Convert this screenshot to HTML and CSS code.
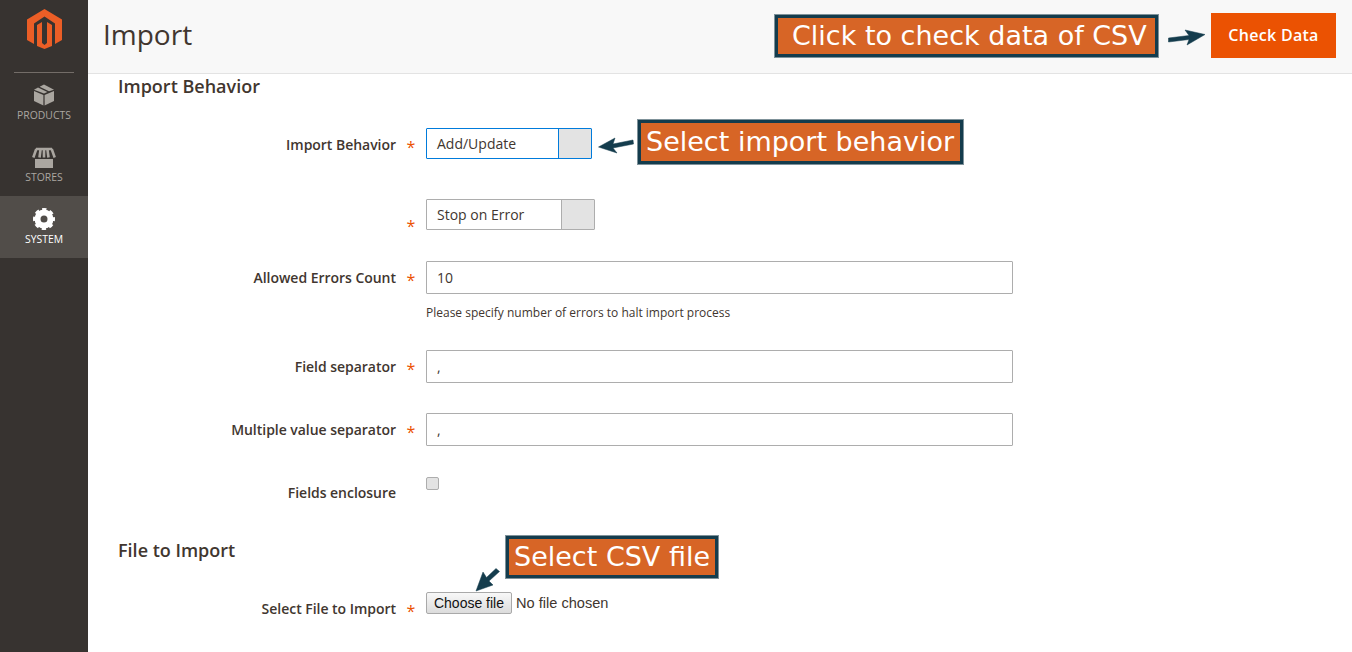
FILE: index.html
```html
<!DOCTYPE html>
<html lang="en">
<head>
  <meta charset="UTF-8">
  <title>Import</title>
  <link rel="stylesheet" href="styles.css">
</head>
<body>

  <div class="page">
    <nav class="sidebar">
      <a class="logo" href="#">
        <svg width="35" height="40" viewBox="27 9 35 40">
          <polygon fill="#eb5e26" points="44.5,9 62,19.5 62,40 55,44 55,23.5 44.5,16.5 34,23.5 34,44 27,40 27,19.5"/>
          <polygon fill="#eb5e26" points="37,25 42,22 42,43 44.5,45 47,43 47,22 52,25 52,46 44.5,49 37,46"/>
        </svg>
      </a>
      <div class="nav-rule"></div>
      <a class="nav-item" href="#">
        <svg width="22" height="22" viewBox="0 0 22 22">
          <polygon fill="#aaa6a0" points="1,7 10.4,11 10.4,21.500 1,17"/>
          <polygon fill="#aaa6a0" points="21,7 11.600,11 11.600,21.500 21,17"/>
          <polygon fill="#aaa6a0" points="1,5.800 5,3.600 14.400,8 11,9.600"/>
          <polygon fill="#aaa6a0" points="6.600,2.800 11,0.600 21,5.800 16,7.200"/>
        </svg>
        <span>Products</span>
      </a>
      <a class="nav-item" href="#">
        <svg width="24" height="22" viewBox="0 -2 24 22">
          <polygon fill="#aaa6a0" points="3,10 21,10 21,20 3,20"/>
          <polygon fill="#373330" points="3,10 21,10 21,11 3,11"/>
          <path fill="none" stroke="#aaa6a0" stroke-width="2.600" d="M4 1h16M4.300 1 1.300 9.500M8.600 1 7.500 9.500M12 1v8.500M15.400 1l1.100 8.500M19.700 1l3 8.500"/>
        </svg>
        <span>Stores</span>
      </a>
      <a class="nav-item active" href="#">
        <svg width="22" height="22" viewBox="-11 -11 22 22">
          <circle r="6.500" fill="none" stroke="#fff" stroke-width="6"/>
          <circle r="9.500" fill="none" stroke="#fff" stroke-width="3" stroke-dasharray="4.200 3.260" stroke-dashoffset="2.100"/>
        </svg>
        <span>System</span>
      </a>
    </nav>

    <div class="main">
      <header class="page-header">
        <h1>Import</h1>
        <button class="btn-primary">Check Data</button>
      </header>

      <div class="content">
        <h2>Import Behavior</h2>

        <div class="row row-behavior">
          <label class="field-label">Import Behavior</label>
          <span class="req">*</span>
          <div class="select focused"><span class="select-value">Add/Update</span><span class="select-arrow"></span></div>
        </div>

        <div class="row row-stop">
          <label class="field-label"></label>
          <span class="req req-low">*</span>
          <div class="select wide"><span class="select-value">Stop on Error</span><span class="select-arrow"></span></div>
        </div>

        <div class="row row-errors">
          <label class="field-label">Allowed Errors Count</label>
          <span class="req">*</span>
          <input class="text-input" type="text" value="10">
        </div>
        <p class="note">Please specify number of errors to halt import process</p>

        <div class="row row-field">
          <label class="field-label">Field separator</label>
          <span class="req">*</span>
          <input class="text-input" type="text" value=",">
        </div>

        <div class="row row-multi">
          <label class="field-label">Multiple value separator</label>
          <span class="req">*</span>
          <input class="text-input" type="text" value=",">
        </div>

        <div class="row row-check">
          <label class="field-label">Fields enclosure</label>
          <span class="req"></span>
          <input class="check" type="checkbox">
        </div>

        <h2 class="file-head">File to Import</h2>

        <div class="row row-file">
          <label class="field-label">Select File to Import</label>
          <span class="req">*</span>
          <div class="file-input">
            <button class="file-button">Choose file</button>
            <span class="file-name">No file chosen</span>
          </div>
        </div>
      </div>
    </div>

    <!-- annotations drawn on top of the screenshot -->
    <div class="callout callout-check">Click to check data of CSV</div>
    <div class="callout callout-behavior">Select import behavior</div>
    <div class="callout callout-file">Select CSV file</div>

    <svg class="arrow arrow-check" width="40" height="18" viewBox="0 0 40 18">
      <path fill="#143c4d" stroke="#143c4d" stroke-width="0.500" stroke-linejoin="round" d="M1.500 9 22 6.500 18 1 38 5.500 20 16 22 10.500 1.500 13Z"/>
    </svg>
    <svg class="arrow arrow-behavior" width="38" height="18" viewBox="0 0 38 18">
      <path fill="#143c4d" stroke="#143c4d" stroke-width="0.500" stroke-linejoin="round" d="M0.500 10 17 1 15 7 35 3 35.500 7 15 11 19 16Z"/>
    </svg>
    <svg class="arrow arrow-file" width="26" height="26" viewBox="0 0 26 26">
      <path fill="#143c4d" stroke="#143c4d" stroke-width="0.500" stroke-linejoin="round" d="M1 25 8 6 11.500 11.500 21 2.500 24.500 5.500 14 15 18 19Z"/>
    </svg>
  </div>

</body>
</html>
```

FILE: styles.css
```css
html, body {
  margin: 0;
  height: 100%;
  overflow: hidden;
}
body {
  font-family: "Open Sans", sans-serif;
  color: #41362f;
  background-color: #fff;
}
a {
  text-decoration: none;
}
.page {
  position: relative;
  display: flex;
  height: 652px;
  overflow: hidden;
}

/* sidebar */
.sidebar {
  width: 88px;
  flex: none;
  background-color: #373330;
}
.logo {
  display: block;
  height: 49px;
  padding: 9px 0 0 27px;
  box-sizing: border-box;
}
.logo svg {
  display: block;
}
.nav-rule {
  height: 1px;
  margin: 23px 14px -1px;
  background-color: #736d68;
}
.nav-item {
  display: flex;
  flex-direction: column;
  align-items: center;
  height: 62px;
  padding-top: 12px;
  box-sizing: border-box;
  color: #aaa6a0;
  font-size: 10.400px;
  line-height: 14px;
  text-transform: uppercase;
}
.nav-item svg {
  display: block;
  margin-bottom: 2px;
}
.nav-item.active {
  background-color: #514d49;
  color: #fff;
}

/* header */
.main {
  flex: 1;
  min-width: 0;
}
.page-header {
  display: flex;
  justify-content: space-between;
  align-items: center;
  height: 74px;
  padding: 0 16px 2px 15px;
  box-sizing: border-box;
  background-color: #f8f8f8;
  border-bottom: 1px solid #e3e3e3;
}
h1 {
  margin: 0 0 4px;
  font-size: 28px;
  font-weight: 400;
  line-height: 38px;
}
.btn-primary {
  width: 125px;
  height: 45px;
  padding: 0 0 1px;
  border: none;
  background-color: #eb5202;
  color: #fff;
  font-family: "Open Sans", sans-serif;
  font-size: 16px;
  font-weight: 600;
  letter-spacing: 0.300px;
}

/* form */
.content {
  padding-left: 30px;
}
h2 {
  margin: 0;
  font-size: 18px;
  font-weight: 600;
  line-height: 24px;
}
.row {
  display: flex;
  align-items: flex-start;
}
.row-behavior { height: 31px; margin-top: 30px; }
.row-stop { height: 31px; margin-top: 40px; }
.row-errors { height: 33px; margin-top: 31px; }
.row-field { height: 33px; margin-top: 29px; }
.row-multi { height: 33px; margin-top: 30px; }
.row-check { height: 32px; margin-top: 30px; }
.row-file { height: 34px; margin-top: 30px; }
.field-label {
  width: 278px;
  flex: none;
  text-align: right;
  font-size: 14px;
  font-weight: 600;
  letter-spacing: -0.030px;
  line-height: 34px;
}
.req {
  width: 30px;
  flex: none;
  text-align: center;
  color: #eb5202;
  font-size: 16px;
  line-height: 38px;
}
.req-low {
  line-height: 54px;
}
.select {
  display: flex;
  width: 166px;
  height: 31px;
  box-sizing: border-box;
  border: 1px solid #adadad;
  border-radius: 1px;
  background-color: #fff;
  font-size: 14px;
  line-height: 29px;
}
.select.wide {
  width: 169px;
}
.select.focused {
  border-color: #007bdb;
}
.select-value {
  flex: 1;
  padding-left: 10px;
}
.select-arrow {
  width: 32px;
  background-color: #e3e3e3;
  border-left: 1px solid #adadad;
}
.select.focused .select-arrow {
  border-left-color: #007bdb;
}
.text-input {
  width: 587px;
  height: 33px;
  box-sizing: border-box;
  padding: 0 10px;
  border: 1px solid #adadad;
  border-radius: 1px;
  color: #41362f;
  font-family: "Open Sans", sans-serif;
  font-size: 14px;
  outline: none;
}
.note {
  margin: 10px 0 0 308px;
  font-size: 12px;
  line-height: 17px;
}
.check {
  appearance: none;
  width: 13px;
  height: 13px;
  margin: 1px 0 0;
  box-sizing: border-box;
  border: 1px solid #adadad;
  border-radius: 2px;
  background-color: #e3e3e3;
}
.file-head {
  margin-top: 30px;
}
.file-input {
  display: flex;
  align-items: center;
  height: 22px;
  font-family: "Liberation Sans", sans-serif;
  font-size: 14px;
}
.file-button {
  width: 86px;
  height: 22px;
  padding: 0;
  box-sizing: border-box;
  border: 1px solid #a9a9a9;
  border-radius: 2px;
  background: linear-gradient(#f8f8f8, #dcdcdc);
  color: #111;
  font-family: "Liberation Sans", sans-serif;
  font-size: 14px;
}
.file-name {
  margin-left: 4px;
  font-size: 14.600px;
}

/* annotations */
.callout {
  position: absolute;
  box-sizing: border-box;
  border: 4px solid #143c4d;
  background-color: #d76526;
  color: #fff;
  font-family: "DejaVu Sans", sans-serif;
  font-size: 27px;
  white-space: nowrap;
  outline: 1px solid #7f929a;
  outline-offset: -1px;
}
.callout-check {
  left: 774px;
  top: 14px;
  width: 385px;
  height: 44px;
  padding-left: 14px;
  line-height: 36px;
}
.callout-behavior {
  left: 637px;
  top: 119px;
  width: 327px;
  height: 46px;
  padding-left: 5px;
  line-height: 38px;
}
.callout-file {
  left: 505px;
  top: 535px;
  width: 214px;
  height: 44px;
  padding-left: 5px;
  line-height: 35px;
}
.arrow {
  position: absolute;
}
.arrow-check {
  left: 1167px;
  top: 29px;
}
.arrow-behavior {
  left: 598px;
  top: 137px;
}
.arrow-file {
  left: 475px;
  top: 566px;
}
```
